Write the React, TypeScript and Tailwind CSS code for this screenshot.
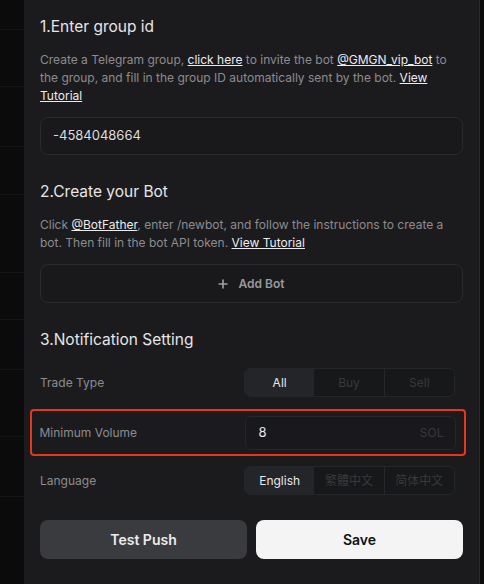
import React from "react";

const font = { fontFamily: "Inter, 'Noto Sans', 'Noto Sans CJK SC', sans-serif" };

function Seg({ items }: { items: string[] }) {
  return (
    <div className="flex h-[29px] w-[211px] rounded-[6px] border border-[#252628] bg-[#171819] overflow-hidden">
      {items.map((it, i) => (
        <div
          key={it}
          className={
            "flex-1 flex items-center justify-center text-[12px] " +
            (i === 0 ? "bg-[#242528] text-[#e8e8e8]" : "text-[#38393c]") +
            (i === 2 ? " border-l border-[#26272a]" : "")
          }
        >
          {it}
        </div>
      ))}
    </div>
  );
}

export default function App() {
  const lines = [30, 87, 147, 195, 273, 320, 370, 437, 497];
  return (
    <div className="flex w-[484px] h-[584px] bg-[#0b0b0b] overflow-hidden" style={font}>
      <div className="w-[24px] h-full flex flex-col shrink-0">
        {lines.map((y, i) => (
          <div key={i} className="border-b border-[#141414]" style={{ height: i === 0 ? y : y - lines[i - 1] }} />
        ))}
      </div>
      <div className="w-[456px] h-full bg-[#1b1b1d] border-r border-[#2a2a2c] pl-4 pr-4 pt-[15px] shrink-0">
        <div className="w-[423px]">
          <h2 className="text-[15.5px] leading-[24px] text-[#e6e6e6]">1.Enter group id</h2>
          <p className="mt-3 text-[12px] leading-[18px] text-[#8c8c8f]">
            Create a Telegram group, <span className="underline text-[#ececec]">click here</span> to invite the bot{" "}
            <span className="underline text-[#ececec]">@GMGN_vip_bot</span> to the group, and fill in the group ID
            automatically sent by the bot. <span className="underline text-[#ececec]">View Tutorial</span>
          </p>
          <div className="mt-[12px] h-[38px] rounded-[8px] border border-[#2a2a2d] bg-[#19191b] flex items-center pl-[12px] text-[13px] text-[#dcdcdc]">
            -4584048664
          </div>

          <h2 className="mt-[25px] text-[15.5px] leading-[24px] text-[#e6e6e6]">2.Create your Bot</h2>
          <p className="mt-3 text-[12px] leading-[18px] text-[#8c8c8f]">
            Click <span className="underline text-[#ececec]">@BotFather</span>, enter /newbot, and follow the instructions to
            create a bot. Then fill in the bot API token. <span className="underline text-[#ececec]">View Tutorial</span>
          </p>
          <div className="mt-3 h-[39px] rounded-[8px] border border-[#2a2a2d] bg-[#19191b] flex items-center justify-center gap-[10px] text-[12px] font-semibold text-[#9a9a9d]">
            <svg width="10" height="10" viewBox="0 0 10 10">
              <path d="M5 0.5v9M0.5 5h9" stroke="#a0a0a3" strokeWidth="1.6" />
            </svg>
            <span>Add Bot</span>
          </div>

          <h2 className="mt-[25px] text-[15.5px] leading-[24px] text-[#e6e6e6]">3.Notification Setting</h2>
          <div className="mt-4 flex items-center justify-between pr-2">
            <span className="text-[12px] text-[#8c8c8f]">Trade Type</span>
            <Seg items={["All", "Buy", "Sell"]} />
          </div>
          <div className="mt-3 -ml-[10px] -mr-[3px] h-[47px] rounded-[4px] border-[2.5px] border-[#e8351d] flex items-center justify-between pl-[7.5px] pr-[8.5px]">
            <span className="text-[12px] text-[#8c8c8f]">Minimum Volume</span>
            <div className="w-[211px] h-[34px] rounded-[6px] border border-[#252628] bg-[#19191b] flex items-center justify-between pl-[13px] pr-[11px]">
              <span className="text-[13px] text-[#e6e6e6]">8</span>
              <span className="text-[12px] text-[#38393c]">SOL</span>
            </div>
          </div>
          <div className="mt-[10px] flex items-center justify-between pr-2">
            <span className="text-[12px] text-[#8c8c8f]">Language</span>
            <Seg items={["English", "繁體中文", "简体中文"]} />
          </div>

          <div className="mt-[25px] flex gap-[9px]">
            <button className="flex-1 h-[39px] rounded-[8px] bg-[#3a3b3f] text-[14px] font-semibold text-[#ececec]">
              Test Push
            </button>
            <button className="flex-1 h-[39px] rounded-[8px] bg-[#f4f4f4] text-[14px] font-semibold text-[#111]">
              Save
            </button>
          </div>
        </div>
      </div>
    </div>
  );
}
